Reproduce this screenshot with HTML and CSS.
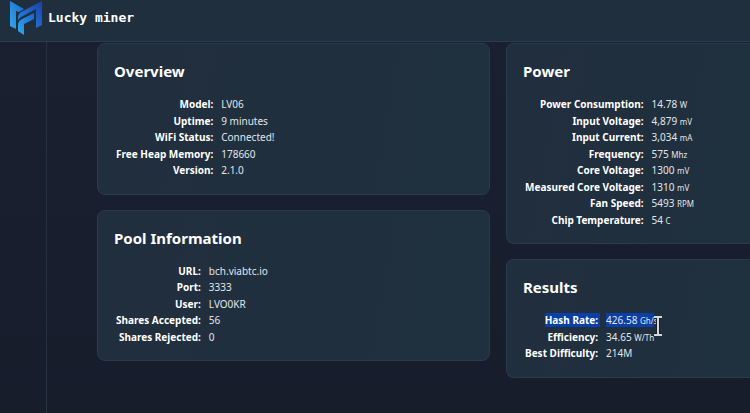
FILE: index.html
```html
<!DOCTYPE html>
<html lang="en">
<head>
<meta charset="utf-8">
<meta name="viewport" content="width=device-width, initial-scale=1">
<title>Lucky miner</title>
<link rel="stylesheet" href="styles.css">
</head>
<body>
<header class="topbar">
  <svg class="logo" viewBox="0 0 32 35" aria-hidden="true">
    <defs>
      <linearGradient id="left" x1="0" y1="1" x2="1" y2="0"><stop offset="0" stop-color="#35a9ee"/><stop offset="1" stop-color="#1766cf"/></linearGradient>
      <linearGradient id="right" x1="0" y1="1" x2="1" y2="0"><stop offset="0" stop-color="#2490e8"/><stop offset="1" stop-color="#1c3cab"/></linearGradient>
    </defs>
    <path fill="url(#left)" d="M0 1 14 9 9 12 6 11V29L0 26Z"/>
    <path fill="url(#right)" d="M8 20V17Q8 14 11 12L32 1V25L26 28V9L13 16Q10 17 8 20Z"/>
    <path fill="url(#left)" d="M8 31V25Q8 21 12 19L24 13V19L14 24V35Z"/>
  </svg>
  <span class="brand">Lucky miner</span>
</header>
<div class="shell">
  <aside class="sidebar"></aside>
  <main class="board">
    <div class="column">
      <section class="card">
        <h2>Overview</h2>
        <table>
          <tr><th scope="row">Model:</th><td>LV06</td></tr>
          <tr><th scope="row">Uptime:</th><td>9 minutes</td></tr>
          <tr><th scope="row">WiFi Status:</th><td>Connected!</td></tr>
          <tr><th scope="row">Free Heap Memory:</th><td>178660</td></tr>
          <tr><th scope="row">Version:</th><td>2.1.0</td></tr>
        </table>
      </section>
      <section class="card">
        <h2>Pool Information</h2>
        <table>
          <tr><th scope="row">URL:</th><td>bch.viabtc.io</td></tr>
          <tr><th scope="row">Port:</th><td>3333</td></tr>
          <tr><th scope="row">User:</th><td>LVO0KR</td></tr>
          <tr><th scope="row">Shares Accepted:</th><td>56</td></tr>
          <tr><th scope="row">Shares Rejected:</th><td>0</td></tr>
        </table>
      </section>
    </div>
    <div class="column column-edge">
      <section class="card">
        <h2>Power</h2>
        <table>
          <tr><th scope="row">Power Consumption:</th><td>14.78 <small>W</small></td></tr>
          <tr><th scope="row">Input Voltage:</th><td>4,879 <small>mV</small></td></tr>
          <tr><th scope="row">Input Current:</th><td>3,034 <small>mA</small></td></tr>
          <tr><th scope="row">Frequency:</th><td>575 <small>Mhz</small></td></tr>
          <tr><th scope="row">Core Voltage:</th><td>1300 <small>mV</small></td></tr>
          <tr><th scope="row">Measured Core Voltage:</th><td>1310 <small>mV</small></td></tr>
          <tr><th scope="row">Fan Speed:</th><td>5493 <small>RPM</small></td></tr>
          <tr><th scope="row">Chip Temperature:</th><td>54 <small>C</small></td></tr>
        </table>
      </section>
      <section class="card">
        <h2>Results</h2>
        <table>
          <tr><th scope="row"><span class="selected selected-label">Hash Rate:</span></th><td><span class="anchor"><span class="selected">426.58 <small>Gh/</small></span><small>s</small><svg class="cursor" viewBox="0 0 10 20" aria-hidden="true"><path class="cursor-edge" d="M1 1H9M1 19H9M5 1V19"/><path class="cursor-core" d="M1 1H9M1 19H9M5 1V19"/></svg></span></td></tr>
          <tr><th scope="row">Efficiency:</th><td>34.65 <small>W/Th</small></td></tr>
          <tr><th scope="row">Best Difficulty:</th><td>214M</td></tr>
        </table>
      </section>
    </div>
  </main>
</div>
</body>
</html>
```
FILE: styles.css
```css
* { box-sizing: border-box; }

body {
  margin: 0;
  min-height: 100vh;
  display: flex;
  flex-direction: column;
  overflow-x: hidden;
  background: linear-gradient(#1a2030, #171d2b);
  color: #e2e6ea;
  font: 10px/1.65 "Noto Sans", "Open Sans", sans-serif;
}

.topbar {
  display: flex;
  align-items: flex-start;
  gap: 6px;
  height: 42px;
  padding-left: 10px;
  background: #202f3e;
  border-bottom: 1px solid #2b3b50;
}

.logo { width: 32px; height: 35px; }

.brand {
  padding-top: 8px;
  color: #fff;
  font: bold 13px/20px "DejaVu Sans Mono", monospace;
}

.shell { display: flex; flex: 1; }

.sidebar {
  width: 47px;
  flex: none;
  border-right: 1px solid #263142;
}

.board {
  flex: 1;
  display: grid;
  grid-template-columns: minmax(0, 393fr) minmax(0, 244fr);
  gap: 16px;
  padding: 1px 0 16px 50px;
}

.column {
  display: flex;
  flex-direction: column;
  gap: 15px;
}

.card {
  padding: 15px 16px;
  border: 1px solid #293b4c;
  border-radius: 8px;
  background: linear-gradient(100deg, #212e3e, #1f303e);
}

.column-edge .card {
  border-right: 0;
  border-radius: 8px 0 0 8px;
}

h2 {
  margin: 0 0 13px;
  color: #fff;
  font: 700 15px/24px "Noto Sans", "Open Sans", sans-serif;
}

table { border-collapse: collapse; }

th, td { padding: 0; white-space: nowrap; }

th {
  padding-left: 2px;
  color: #fff;
  font-weight: 700;
  text-align: right;
}

td { padding-left: 8px; }

small { font-size: 8px; line-height: 1; }

.selected { background: #0b3fa8; }

.selected-label { padding-right: 2px; margin-right: -2px; }

.anchor { position: relative; }

.cursor {
  position: absolute;
  top: 3px;
  right: -5px;
  width: 10px;
  height: 20px;
  fill: none;
}

.cursor-edge { stroke: #17212d; stroke-width: 4; }

.cursor-core { stroke: #d5d8da; stroke-width: 2; }
```
